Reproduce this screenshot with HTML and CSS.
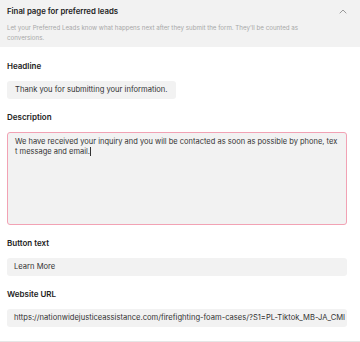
FILE: index.html
```html
<!DOCTYPE html>
<html lang="en">
<head>
    <meta charset="UTF-8">
    <meta name="viewport" content="width=device-width, initial-scale=1.0">
    <title>Final page for preferred leads</title>
    <link rel="stylesheet" href="styles.css">
</head>
<body>
    <div class="section">
        <div class="section-head">
            <div class="head-row">
                <div class="head-title">Final page for preferred leads</div>
                <svg class="chevron" width="8" height="5" viewBox="0 0 8 5"><path d="M0.7 4.3 L4 1 L7.3 4.3" fill="none" stroke="#9a9a9a" stroke-width="1"/></svg>
            </div>
            <div class="head-sub">Let your Preferred Leads know what happens next after they submit the form. They'll be counted as conversions.</div>
        </div>

        <div class="form">
            <div class="field">
                <div class="label">Headline</div>
                <div class="input input-fit">Thank you for submitting your information.</div>
            </div>

            <div class="field">
                <div class="label">Description</div>
                <div class="textarea">We have received your inquiry and you will be contacted as soon as possible by phone, text message and email.<span class="caret"></span></div>
            </div>

            <div class="field">
                <div class="label">Button text</div>
                <div class="input">Learn More</div>
            </div>

            <div class="field">
                <div class="label">Website URL</div>
                <div class="input input-clip">https://nationwidejusticeassistance.com/firefighting-foam-cases/?S1=PL-Tiktok_MB-JA_CMI</div>
            </div>
        </div>
    </div>
</body>
</html>
```

FILE: styles.css
```css
* { margin: 0; padding: 0; box-sizing: border-box; }
body {
    font-family: Inter, "Noto Sans", sans-serif;
    background: #fff;
    color: #222;
    width: 360px;
    height: 342px;
    overflow: hidden;
}

.section { border-bottom: 1px solid #e6e6e6; height: 342px; }
.section-head { background: #f2f2f2; padding: 5px 13px 0 7px; height: 47px; }
.head-row { display: flex; align-items: center; justify-content: space-between; height: 12px; }
.head-title { font-size: 7.8px; font-weight: 600; color: #222; line-height: 12px; }
.head-sub { font-size: 6.2px; line-height: 10px; color: #a8a8a8; margin-top: 6px; padding-right: 10px; }

.form { padding: 14px 13px 0 7px; }
.field { margin-bottom: 13px; }
.label { font-size: 8px; font-weight: 600; line-height: 10px; margin-bottom: 10px; color: #222; }

.input {
    background: #f2f2f2;
    border-radius: 3px;
    height: 18px;
    line-height: 18px;
    font-size: 7.6px;
    color: #333;
    padding: 0 7px;
    white-space: nowrap;
}
.input-fit { width: fit-content; padding: 0 8px; }
.input-clip { overflow: hidden; }

.textarea {
    background: #f2f2f2;
    border: 1.2px solid #f2a2b4;
    border-radius: 3px;
    height: 93px;
    padding: 4px 8px 0 7px;
    font-size: 7.5px;
    line-height: 10px;
    color: #333;
    word-break: break-all;
}
.caret { display: inline-block; width: 1px; height: 9px; background: #333; vertical-align: -2px; }
```
